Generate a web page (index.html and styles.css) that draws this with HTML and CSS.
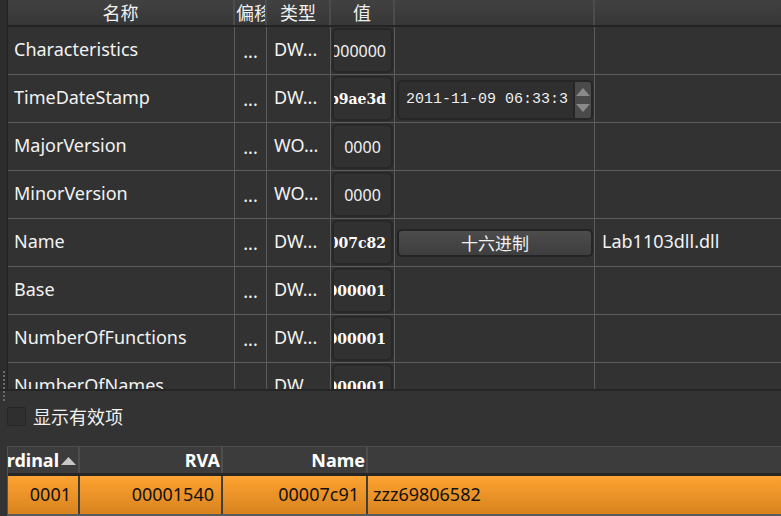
FILE: index.html
```html
<!DOCTYPE html>
<html>
<head>
<meta charset="utf-8">
<link rel="stylesheet" href="styles.css">
</head>
<body>
<div class="app">
  <div class="top">
    <div class="strip"></div>
    <div class="table">
      <div class="thead">
        <div class="th">名称</div>
        <div class="th th-left">偏移</div>
        <div class="th">类型</div>
        <div class="th">值</div>
        <div class="th"></div>
        <div class="th th-last"></div>
      </div>
      <div class="tbody">
        <div class="row">
          <div class="td name">Characteristics</div>
          <div class="td mid">...</div>
          <div class="td type">DW...</div>
          <div class="td val"><div class="vbox"><span class="v-sans">00000000</span></div></div>
          <div class="td"></div>
          <div class="td last"></div>
        </div>
        <div class="row">
          <div class="td name">TimeDateStamp</div>
          <div class="td mid">...</div>
          <div class="td type">DW...</div>
          <div class="td val"><div class="vbox"><span class="v-bold">4eb9ae3d</span></div></div>
          <div class="td extra">
            <div class="spin">
              <span class="spin-text">2011-11-09 06:33:3</span>
              <div class="spin-btns">
                <svg class="arr" width="16" height="10" viewBox="0 0 16 10"><polygon points="1,9 8,1 15,9" fill="#8a8a8a"/></svg>
                <svg class="arr" width="16" height="10" viewBox="0 0 16 10"><polygon points="1,1 15,1 8,9" fill="#8a8a8a"/></svg>
              </div>
            </div>
          </div>
          <div class="td last"></div>
        </div>
        <div class="row">
          <div class="td name">MajorVersion</div>
          <div class="td mid">...</div>
          <div class="td type">WO...</div>
          <div class="td val"><div class="vbox center"><span class="v-sans">0000</span></div></div>
          <div class="td"></div>
          <div class="td last"></div>
        </div>
        <div class="row">
          <div class="td name">MinorVersion</div>
          <div class="td mid">...</div>
          <div class="td type">WO...</div>
          <div class="td val"><div class="vbox center"><span class="v-sans">0000</span></div></div>
          <div class="td"></div>
          <div class="td last"></div>
        </div>
        <div class="row">
          <div class="td name">Name</div>
          <div class="td mid">...</div>
          <div class="td type">DW...</div>
          <div class="td val"><div class="vbox"><span class="v-bold">00007c82</span></div></div>
          <div class="td extra"><button class="btn">十六进制</button></div>
          <div class="td last str">Lab1103dll.dll</div>
        </div>
        <div class="row">
          <div class="td name">Base</div>
          <div class="td mid">...</div>
          <div class="td type">DW...</div>
          <div class="td val"><div class="vbox"><span class="v-bold">00000001</span></div></div>
          <div class="td"></div>
          <div class="td last"></div>
        </div>
        <div class="row">
          <div class="td name">NumberOfFunctions</div>
          <div class="td mid">...</div>
          <div class="td type">DW...</div>
          <div class="td val"><div class="vbox"><span class="v-bold">00000001</span></div></div>
          <div class="td"></div>
          <div class="td last"></div>
        </div>
        <div class="row">
          <div class="td name">NumberOfNames</div>
          <div class="td mid">...</div>
          <div class="td type">DW...</div>
          <div class="td val"><div class="vbox"><span class="v-bold">00000001</span></div></div>
          <div class="td"></div>
          <div class="td last"></div>
        </div>
      </div>
    </div>
  </div>
  <div class="grip"></div>
  <div class="panel">
    <label class="check"><span class="box"></span><span class="check-label">显示有效项</span></label>
  </div>
  <div class="bottom">
    <div class="bhead">
      <div class="bh bh-ord"><span>Ordinal</span><svg class="sort" width="15" height="9" viewBox="0 0 15 9"><polygon points="0,9 7.5,1 15,9" fill="#c8c8c8"/></svg></div>
      <div class="bh">RVA</div>
      <div class="bh">Name</div>
      <div class="bh bh-last"></div>
    </div>
    <div class="brow">
      <div class="bd">0001</div>
      <div class="bd">00001540</div>
      <div class="bd">00007c91</div>
      <div class="bd bd-last">zzz69806582</div>
    </div>
  </div>
</div>
</body>
</html>
```

FILE: styles.css
```css
* { box-sizing: border-box; }
html, body { margin: 0; padding: 0; }
body {
  width: 781px;
  height: 516px;
  overflow: hidden;
  background: #333333;
  font-family: "Noto Sans", "Noto Sans CJK SC", sans-serif;
  color: #f2f2f2;
}
.app { position: relative; width: 781px; height: 516px; }

.top {
  display: grid;
  grid-template-columns: 8px 1fr;
  height: 391px;
  border-bottom: 2px solid #262626;
}
.strip {
  background: #2c2c2c;
  border-right: 1px solid #222222;
}
.table { overflow: hidden; background: #323232; }

.thead {
  display: grid;
  grid-template-columns: 227px 32px 64px 64px 200px 1fr;
  height: 27px;
  background: linear-gradient(#414141, #373737);
  border-bottom: 2px solid #232323;
}
.th {
  font-family: "Noto Sans CJK SC", sans-serif;
  font-size: 18px;
  line-height: 24px;
  text-align: center;
  white-space: nowrap;
  overflow: hidden;
  border-right: 2px solid #4c4c4c;
  color: #f0f0f0;
}
.th-left { text-align: left; padding-left: 1px; }
.th-last { border-right: none; }

.tbody { height: 362px; overflow: hidden; }
.row {
  display: grid;
  grid-template-columns: 227px 32px 64px 64px 200px 1fr;
  height: 48px;
  border-bottom: 1px solid #5c5c5c;
}
.td {
  border-right: 1px solid #5c5c5c;
  display: flex;
  align-items: center;
  font-size: 18px;
  white-space: nowrap;
  overflow: hidden;
  padding-bottom: 3px;
}
.td.last { border-right: none; }
.name { padding-left: 6px; }
.mid { justify-content: center; padding-bottom: 0; }
.type { padding-left: 7px; }
.str { padding-left: 7px; }

.val { padding: 1px; }
.vbox {
  width: 61px;
  height: 45px;
  border: 2px solid #272727;
  border-radius: 5px;
  background: #313131;
  display: flex;
  align-items: center;
  justify-content: flex-end;
  padding-right: 5px;
  overflow: hidden;
}
.vbox.center { justify-content: center; padding-right: 0; }
.v-sans { font-size: 16px; color: #f2f2f2; }
.v-bold {
  font-family: "DejaVu Serif", serif;
  font-weight: bold;
  font-size: 14px;
  color: #ffffff;
}

.extra { padding-left: 2px; padding-bottom: 0; }
.spin {
  width: 196px;
  height: 40px;
  margin-top: 2px;
  border: 2px solid #262626;
  border-radius: 5px;
  background: #2f2f2f;
  display: flex;
  align-items: center;
  overflow: hidden;
}
.spin-text {
  flex: 1;
  font-family: "Liberation Mono", monospace;
  font-size: 15px;
  padding-left: 7px;
  color: #eeeeee;
  overflow: hidden;
}
.spin-btns {
  width: 18px;
  height: 100%;
  background: #4a4a4a;
  border-left: 2px solid #262626;
  display: flex;
  flex-direction: column;
  align-items: center;
  justify-content: space-around;
  padding: 2px 0;
}
.arr { display: block; }

.btn {
  width: 196px;
  height: 28px;
  margin-top: 1px;
  border: 2px solid #242424;
  border-radius: 5px;
  background: linear-gradient(#4c4c4c, #3e3e3e);
  color: #f0f0f0;
  font-family: "Noto Sans CJK SC", sans-serif;
  font-size: 17px;
  line-height: 22px;
  padding: 0;
}

.grip {
  position: absolute;
  left: 3px;
  top: 371px;
  width: 2px;
  height: 32px;
  background: repeating-linear-gradient(#6a6a6a 0 2px, transparent 2px 4px);
}

.panel {
  height: 55px;
  display: flex;
  align-items: center;
  padding-left: 7px;
  padding-bottom: 5px;
}
.check { display: flex; align-items: center; }
.box {
  width: 19px;
  height: 19px;
  border: 1px solid #262626;
  border-radius: 2px;
  background: #2f2f2f;
}
.check-label {
  margin-left: 7px;
  font-family: "Noto Sans CJK SC", sans-serif;
  font-size: 18px;
  color: #f0f0f0;
}

.bottom {
  margin-left: 7px;
  border-left: 1px solid #555555;
  border-top: 1px solid #4e4e4e;
}
.bhead, .brow {
  display: grid;
  grid-template-columns: 72px 143px 145px 1fr;
}
.bhead {
  height: 29px;
  background: #3c3c3c;
  border-bottom: 3px solid #262626;
}
.bh {
  border-right: 2px solid #4e4e4e;
  font-weight: bold;
  font-size: 18px;
  line-height: 26px;
  text-align: right;
  padding-right: 1px;
  white-space: nowrap;
  overflow: hidden;
  color: #ffffff;
}
.bh-ord {
  display: flex;
  justify-content: flex-end;
  align-items: center;
  padding-right: 2px;
}
.bh-ord span { flex-shrink: 0; }
.sort { flex-shrink: 0; margin-left: 2px; }
.bh-last { border-right: none; }

.brow {
  height: 40px;
  background: linear-gradient(#fda332, #d8831f);
  border-bottom: 2px solid #5a5a5a;
}
.bd {
  border-right: 2px solid #3e3e3e;
  font-size: 18px;
  line-height: 37px;
  text-align: right;
  padding-right: 7px;
  color: #111111;
  white-space: nowrap;
  overflow: hidden;
}
.bd-last { border-right: none; text-align: left; padding-left: 5px; }
```
